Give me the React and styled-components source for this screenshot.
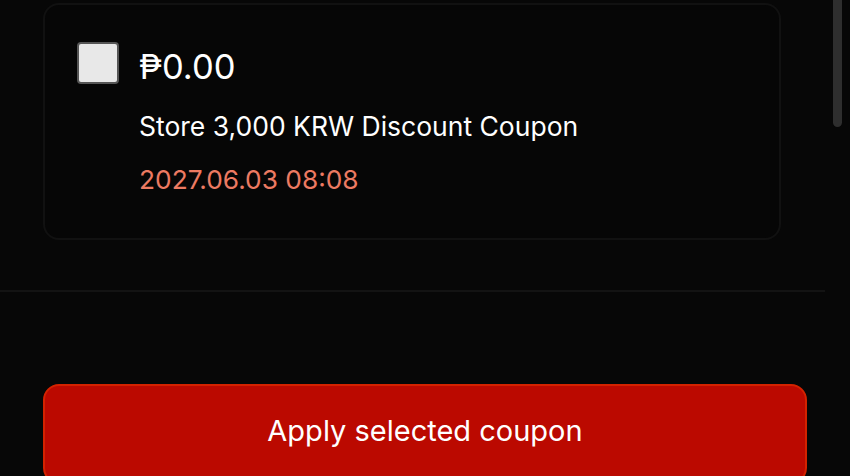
import React from 'react';
import styled, { createGlobalStyle } from 'styled-components';

const GlobalStyle = createGlobalStyle`
    html, body {
        margin: 0;
        padding: 0;
        background: #070707;
        overflow: hidden;
    }
    body {
        font-family: Inter, "Noto Sans", sans-serif;
        color: #fff;
    }
`

const Screen = styled.div`
    position: relative;
    width: 850px;
    height: 476px;
    background: #070707;
    overflow: hidden;
`
const List = styled.div`
    padding: 3px 44px 0 43px;
    height: 292px;
    border-bottom: 2px solid #131313;
    margin-right: 25px;
    box-sizing: border-box;
`
const Card = styled.div`
    display: flex;
    gap: 20px;
    height: 237px;
    box-sizing: border-box;
    padding: 37px 32px;
    border: 2px solid #111;
    border-radius: 16px;
    background: #060606;
`
const Check = styled.div`
    width: 38px;
    height: 38px;
    flex: none;
    background: #e8e8e8;
    border: 2px solid #555;
    border-radius: 4px;
`
const Info = styled.div`
    display: flex;
    flex-direction: column;
`
const Price = styled.div`
    font-size: 34.5px;
    line-height: 50px;
    margin-top: 0;
`
const Title = styled.div`
    font-size: 26.5px;
    line-height: 30px;
    margin-top: 19px;
`
const Expiry = styled.div`
    font-size: 26.3px;
    line-height: 30px;
    margin-top: 24px;
    color: #ec7a62;
`
const Scrollbar = styled.div`
    position: absolute;
    top: -10px;
    right: 8px;
    width: 9px;
    height: 137px;
    border-radius: 5px;
    background: #2e2e2e;
`
const Footer = styled.div`
    padding: 92px 43px 0;
`
const ApplyButton = styled.button`
    width: 764px;
    height: 100px;
    box-sizing: border-box;
    background: #bb0900;
    border: 2px solid #d42200;
    border-radius: 16px;
    color: #fff;
    font-family: Inter, "Noto Sans", sans-serif;
    font-size: 29px;
    padding: 0 0 8px;
`

const App = () => {
    return (
        <Screen>
            <GlobalStyle />
            <List>
                <Card>
                    <Check />
                    <Info>
                        <Price>₱0.00</Price>
                        <Title>Store 3,000 KRW Discount Coupon</Title>
                        <Expiry>2027.06.03 08:08</Expiry>
                    </Info>
                </Card>
            </List>
            <Footer>
                <ApplyButton>Apply selected coupon</ApplyButton>
            </Footer>
            <Scrollbar />
        </Screen>
    );
};

export default App;
